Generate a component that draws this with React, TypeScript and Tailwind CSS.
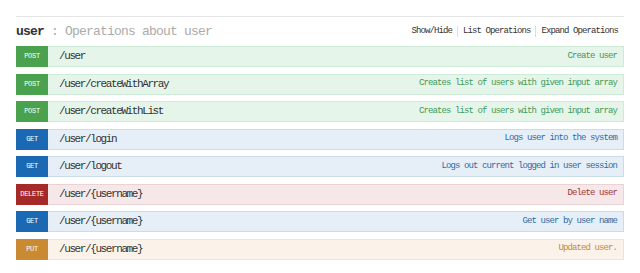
import React from 'react';

type Method = 'POST' | 'GET' | 'DELETE' | 'PUT';

interface Operation {
  method: Method;
  path: string;
  summary: string;
}

const operations: Operation[] = [
  { method: 'POST', path: '/user', summary: 'Create user' },
  { method: 'POST', path: '/user/createWithArray', summary: 'Creates list of users with given input array' },
  { method: 'POST', path: '/user/createWithList', summary: 'Creates list of users with given input array' },
  { method: 'GET', path: '/user/login', summary: 'Logs user into the system' },
  { method: 'GET', path: '/user/logout', summary: 'Logs out current logged in user session' },
  { method: 'DELETE', path: '/user/{username}', summary: 'Delete user' },
  { method: 'GET', path: '/user/{username}', summary: 'Get user by user name' },
  { method: 'PUT', path: '/user/{username}', summary: 'Updated user.' },
];

// per-method colours, roughly the old swagger-ui palette
const styles: Record<Method, { row: string; badge: string; text: string }> = {
  POST: { row: 'bg-[#e6f5ea] border-[#cdebd6]', badge: 'bg-[#4aa24e]', text: 'text-[#3e9a57]' },
  GET: { row: 'bg-[#e6eff7] border-[#cadcec]', badge: 'bg-[#1b69b2]', text: 'text-[#2f6aa4]' },
  DELETE: { row: 'bg-[#f6e7e8] border-[#ecd2d3]', badge: 'bg-[#a52a27]', text: 'text-[#a0363a]' },
  PUT: { row: 'bg-[#fbf3ea] border-[#f1e3d0]', badge: 'bg-[#c98a32]', text: 'text-[#c08a3e]' },
};

function OperationRow({ op }: { op: Operation }) {
  const s = styles[op.method];
  return (
    <div className={`flex items-center h-[21px] border ${s.row}`}>
      <div
        className={`w-[32px] -ml-px h-[21px] flex items-center justify-center text-white text-[7px] tracking-[-0.3px] ${s.badge}`}
      >
        {op.method}
      </div>
      <span className="ml-[11px] text-[11px] tracking-[-1.4px] text-[#333]">{op.path}</span>
      <span className={`ml-auto mr-[6px] text-[9px] tracking-[-0.9px] ${s.text}`}>{op.summary}</span>
    </div>
  );
}

export default function App() {
  return (
    <div
      className="bg-white w-[640px] h-[273px] px-4 pt-[16px]"
      style={{ fontFamily: '"Liberation Mono", "DejaVu Sans Mono", monospace' }}
    >
      <div className="w-[608px] border-t border-[#e6e6e6]">
        <div className="h-[29px] flex items-center">
          <span className="text-[13px] font-bold tracking-[-0.8px] text-[#333]">user</span>
          <span className="ml-[7px] text-[13px] tracking-[-0.8px] text-[#aaa]">: Operations about user</span>
          <div className="ml-auto mr-[6px] flex items-center text-[9px] tracking-[-0.9px] text-[#333]">
            <span>Show/Hide</span>
            <span className="mx-[5px] h-[11px] border-l border-[#ddd]" />
            <span>List Operations</span>
            <span className="mx-[5px] h-[11px] border-l border-[#ddd]" />
            <span>Expand Operations</span>
          </div>
        </div>
        <div className="flex flex-col gap-[6.5px]">
          {operations.map((op, i) => (
            <OperationRow key={i} op={op} />
          ))}
        </div>
      </div>
    </div>
  );
}
